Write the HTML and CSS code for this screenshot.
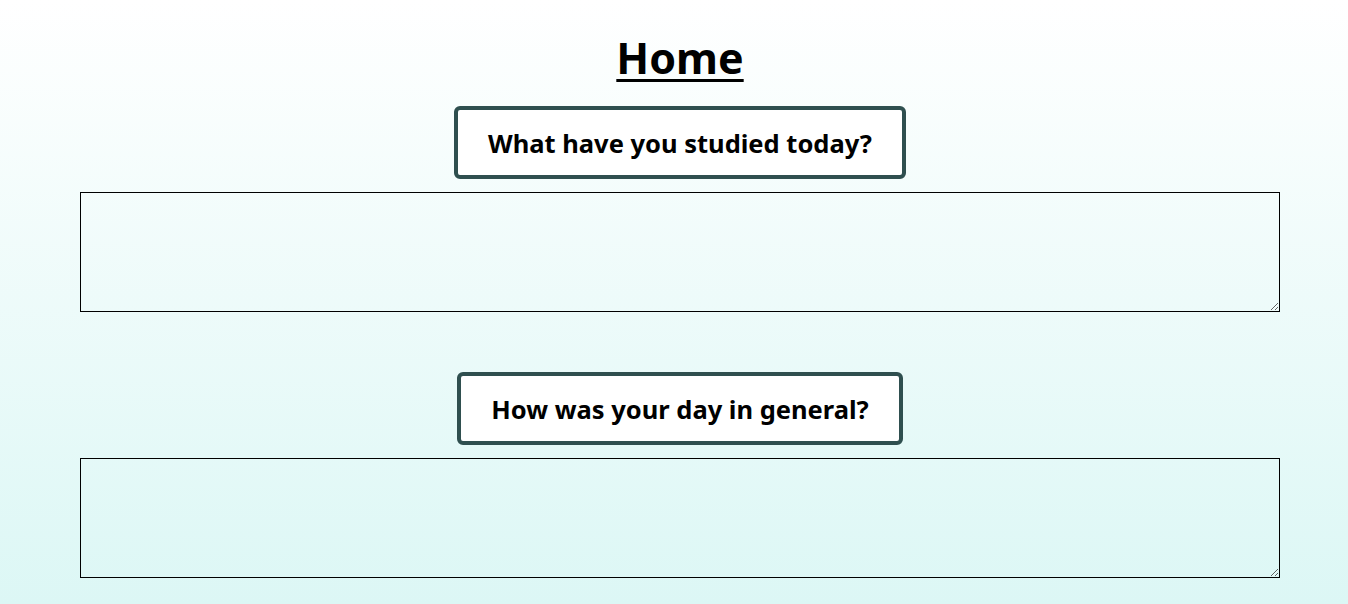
FILE: index.html
```html
<!DOCTYPE html>
<html lang="en">
<head>
<meta charset="utf-8">
<title>Home</title>
<link rel="stylesheet" href="styles.css">
</head>
<body>
<main class="page">
  <h1 class="title">Home</h1>
  <section class="entry">
    <h2 class="question">What have you studied today?</h2>
    <textarea class="answer"></textarea>
  </section>
  <section class="entry entry-second">
    <h2 class="question">How was your day in general?</h2>
    <textarea class="answer"></textarea>
  </section>
</main>
</body>
</html>
```

FILE: styles.css
```css
html, body {
  margin: 0;
  padding: 0;
  height: 100%;
}
body {
  background: linear-gradient(to bottom, #ffffff 0%, #dcf7f5 100%);
  font-family: "Segoe UI", "Noto Sans", "Open Sans", sans-serif;
  color: #000;
  overflow: hidden;
}
.page {
  width: 1200px;
  margin-left: 80px;
  display: flex;
  flex-direction: column;
  align-items: center;
}
.title {
  margin: 28px 0 0;
  font-size: 43px;
  font-weight: 700;
  line-height: 60px;
  text-decoration: underline;
  text-decoration-thickness: 3px;
  text-underline-offset: 5px;
}
.entry {
  width: 100%;
  display: flex;
  flex-direction: column;
  align-items: center;
  margin-top: 18px;
}
.entry-second {
  margin-top: 60px;
}
.question {
  margin: 0;
  box-sizing: border-box;
  height: 73px;
  padding: 0 30px;
  display: flex;
  align-items: center;
  background: #ffffff;
  border: 4px solid #2f4f4f;
  border-radius: 6px;
  font-size: 25.5px;
  font-weight: 700;
}
.answer {
  margin-top: 13px;
  box-sizing: border-box;
  width: 1200px;
  height: 120px;
  border: 1px solid #000;
  background: transparent;
  display: block;
}
```
